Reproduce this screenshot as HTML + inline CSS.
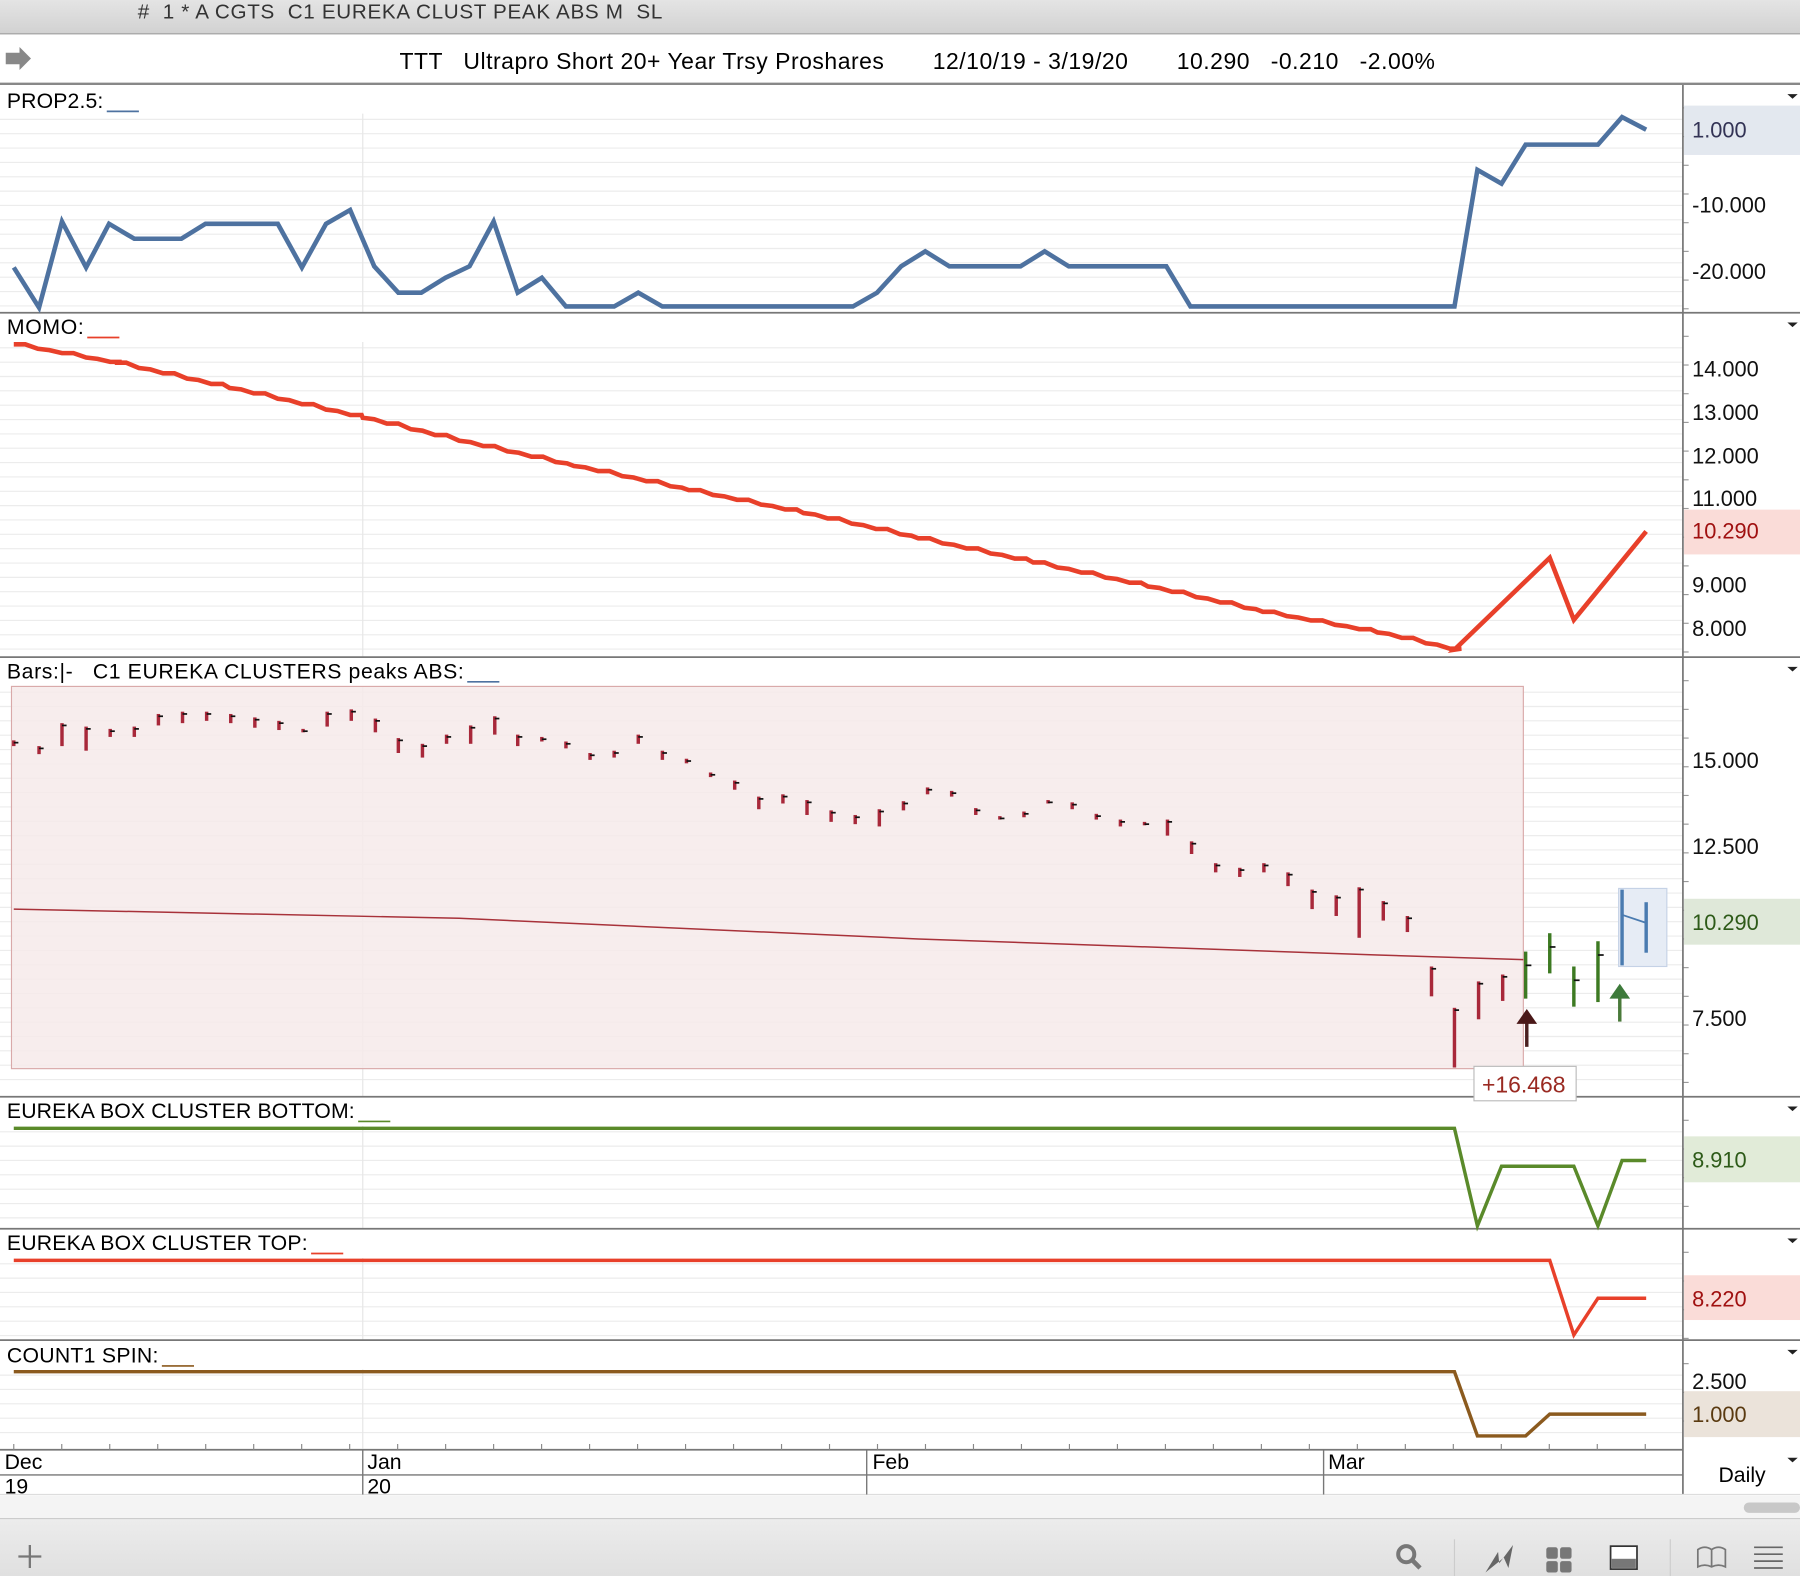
<!DOCTYPE html>
<html><head><meta charset="utf-8"><style>
html,body{margin:0;padding:0;background:#fff;}
svg{display:block;}
text{font-family:"Liberation Sans",Arial,sans-serif;white-space:pre;}
</style></head><body>
<svg id="s" width="1800" height="1576" viewBox="0 0 1568 1373" preserveAspectRatio="none" xmlns="http://www.w3.org/2000/svg">
<defs>
<linearGradient id="tb" x1="0" y1="0" x2="0" y2="1"><stop offset="0" stop-color="#e4e4e4"/><stop offset="1" stop-color="#d2d2d2"/></linearGradient>
<linearGradient id="ft" x1="0" y1="0" x2="0" y2="1"><stop offset="0" stop-color="#ececec"/><stop offset="1" stop-color="#e0e0e0"/></linearGradient>
</defs>
<rect x="0" y="0" width="1568" height="29" fill="url(#tb)"/>
<text x="120" y="16" font-size="18" fill="#333" textLength="457" lengthAdjust="spacing" xml:space="preserve">#  1 * A CGTS  C1 EUREKA CLUST PEAK ABS M  SL</text>
<line x1="0" y1="29.5" x2="1568" y2="29.5" stroke="#999" stroke-width="1"/>
<path d="M5 46 h12 v-5 l10 10 l-10 10 v-5 h-12z" fill="#888"/>
<text x="348" y="60" font-size="20" fill="#000" textLength="902" lengthAdjust="spacing" xml:space="preserve">TTT   Ultrapro Short 20+ Year Trsy Proshares       12/10/19 - 3/19/20       10.290   -0.210   -2.00%</text>
<line x1="0" y1="73" x2="1568" y2="73" stroke="#888" stroke-width="2"/>
<g id="grid"></g>
<g id="main"></g>
</svg>
<script>
const NS="http://www.w3.org/2000/svg";
const g=document.getElementById('grid'), m=document.getElementById('main');
function el(p,tag,a,txt){const e=document.createElementNS(NS,tag);for(const k in a)e.setAttribute(k,a[k]);if(txt!==undefined)e.textContent=txt;p.appendChild(e);return e;}
const panels=[[74,272],[273,572],[573,955],[956,1070],[1071,1167],[1168,1262]];
panels.forEach(([a,b])=>{for(let y=a+30;y<b-2;y+=12.5)el(g,'line',{x1:0,y1:y,x2:1466,y2:y,stroke:'#ececec','stroke-width':1});
 el(g,'line',{x1:316,y1:a+25,x2:316,y2:b,stroke:'#e6e6e6','stroke-width':1});});
el(m,'rect',{x:10,y:598,width:1317,height:333,fill:'#f6eaea','fill-opacity':0.85,stroke:'#d9a9a9','stroke-width':1});
panels.forEach(([a,b],i)=>{ if(i>0) el(m,'line',{x1:0,y1:a-0.5,x2:1568,y2:a-0.5,stroke:'#777','stroke-width':1.5});
 el(m,'path',{d:`M1557 ${a+8} h9 l-4.5 4z`,fill:'#222'});
 for(let y=a+20;y<b;y+=25) el(m,'line',{x1:1466,y1:y,x2:1471,y2:y,stroke:'#999'});});
el(m,'line',{x1:1466,y1:74,x2:1466,y2:1302,stroke:'#777','stroke-width':1.5});
function pl(pts,c,w){el(m,'polyline',{points:pts.map(p=>p.join(',')).join(' '),fill:'none',stroke:c,'stroke-width':w,'stroke-linejoin':'miter'});}
pl([[12,233],[34,268],[54,193],[75,233],[95,195],[117,208],[158,208],[179,195],[242,195],[263,233],[284,195],[305,183],[326,232],[347,255],[367,255],[388,242],[409,232],[430,193],[451,255],[472,242],[493,267],[535,267],[556,255],[577,267],[743,267],[764,255],[785,232],[806,219],[827,232],[889,232],[910,219],[931,232],[1016,232],[1037,267],[1267,267],[1287,148],[1308,160],[1329,126],[1392,126],[1413,102],[1434,113]],'#4e72a0',4);
let mp=[];const mom=[[12,300],[100,316],[200,338],[316,364],[400,384],[500,406],[600,427],[700,447],[800,469],[900,490],[1000,511],[1100,533],[1200,551],[1267,566]];
for(let i=0;i<mom.length-1;i++){const [x1,y1]=mom[i],[x2,y2]=mom[i+1];for(let x=x1;x<x2;x+=21){const t=(x-x1)/(x2-x1);const y=y1+(y2-y1)*t;mp.push([x,y]);mp.push([x+10,y+1.2*(((x/21)|0)%2)]);}}
mp.push([1267,566],[1350,486],[1371,540],[1434,463]);
pl(mp,'#e8402a',4);
el(m,'path',{d:'M12 792 L400 800 L800 818 L1200 832 L1327 836',fill:'none',stroke:'#a8323a','stroke-width':1.3});
const bars=[[12,645,650],[34,650,657],[54,630,650],[75,633,654],[96,635,642],[117,633,642],[138,622,632],[159,620,630],[180,620,628],[201,622,630],[222,625,634],[243,628,636],[264,635,638],[285,620,633],[306,618,628],[327,626,638],[347,643,656],[368,648,660],[389,640,648],[410,632,648],[431,624,640],[451,640,650],[472,642,646],[493,646,652],[514,656,662],[535,654,660],[556,640,648],[577,654,662],[598,661,665],[619,673,677],[640,680,688],[661,694,705],[682,692,700],[703,697,710],[724,706,716],[745,710,718],[766,705,720],[787,698,706],[808,686,692],[829,689,694],[850,704,710],[871,711,714],[892,707,712],[913,697,700],[934,699,705],[955,709,714],[976,714,720],[997,716,719],[1017,714,728],[1038,733,744],[1059,752,760],[1080,756,764],[1101,752,760],[1122,760,772],[1143,775,792],[1164,780,798],[1184,773,817],[1205,785,802],[1226,798,812],[1247,842,868],[1267,878,930],[1288,855,888],[1309,849,872]];
bars.forEach(([x,h,l])=>{el(m,'line',{x1:x,y1:h,x2:x,y2:l,stroke:'#a8283a','stroke-width':3});el(m,'line',{x1:x,y1:h+2,x2:x+4,y2:h+2,stroke:'#111','stroke-width':1.5});});
el(m,'rect',{x:1410,y:774,width:42,height:68,fill:'#e6ecf5',stroke:'#c5d2e6','stroke-width':1});
[[1329,829,870],[1350,813,848],[1371,842,877],[1392,820,873]].forEach(([x,h,l])=>{el(m,'line',{x1:x,y1:h,x2:x,y2:l,stroke:'#3d7a22',"stroke-width":3});el(m,'line',{x1:x,y1:h+12,x2:x+5,y2:h+12,stroke:'#111','stroke-width':1.5});});
[[1413,775,841],[1434,786,830]].forEach(([x,h,l])=>{el(m,'line',{x1:x,y1:h,x2:x,y2:l,stroke:'#4a7bb0','stroke-width':3});});
el(m,'line',{x1:1413,y1:797,x2:1434,y2:804,stroke:'#4a7bb0','stroke-width':1.5});
el(m,'path',{d:'M1330 912 V890',stroke:'#4a2020','stroke-width':3});el(m,'path',{d:'M1321 892 L1330 879 L1339 892Z',fill:'#4a1818'});
el(m,'path',{d:'M1411 890 V868',stroke:'#4a7a3a','stroke-width':3});el(m,'path',{d:'M1402 870 L1411 857 L1420 870Z',fill:'#3d7a3a'});
el(m,'rect',{x:1284,y:929,width:89,height:30,fill:'#fff',stroke:'#bbb'});
el(m,'text',{x:1291,y:952,'font-size':20,fill:'#9a2a22'},'+16.468');
pl([[12,983],[1267,983],[1287,1068],[1308,1016],[1371,1016],[1392,1068],[1413,1011],[1434,1011]],'#5a8a2a',3);
pl([[12,1098],[1350,1098],[1371,1163],[1392,1131],[1434,1131]],'#e8402a',3);
pl([[12,1195],[1267,1195],[1287,1251],[1329,1251],[1350,1232],[1434,1232]],'#8b5a1e',3);
[[92,135,'#e3e8ef','#335','1.000',113],[444,483,'#fadcd8','#a01010','10.290',462],[783,823,'#dfe8d9','#2d5a18','10.290',803],[990,1030,'#e1ebd8','#2d5a18','8.910',1010],[1111,1150,'#fadcd8','#a01010','8.220',1131],[1212,1252,'#ebe3da','#5a3a10','1.000',1232]].forEach(([a,b,bg,c,t,y])=>{el(m,'rect',{x:1467,y:a,width:101,height:b-a,fill:bg});el(m,'text',{x:1474,y:y+7,'font-size':19,fill:c},t);});
[['-10.000',178],['-20.000',236],['14.000',321],['13.000',359],['12.000',397],['11.000',434],['9.000',509],['8.000',547],['15.000',662],['12.500',737],['7.500',887],['2.500',1203]].forEach(([t,y])=>el(m,'text',{x:1474,y:y+7,'font-size':19,fill:'#111'},t));
[['PROP2.5:',94,'#4e72a0',90],['MOMO:',291,'#e8402a',73],['Bars:|-   C1 EUREKA CLUSTERS peaks ABS:',591,'#4e72a0',404],['EUREKA BOX CLUSTER BOTTOM:',974,'#5a8a2a',309],['EUREKA BOX CLUSTER TOP:',1089,'#e8402a',268],['COUNT1 SPIN:',1187,'#8b5a1e',138]].forEach(([t,y,c,w])=>{el(m,'text',{x:6,y:y,'font-size':18.5,fill:'#000',textLength:w-6,lengthAdjust:'spacing'},t);el(m,'line',{x1:w+3,y1:y+3,x2:w+31,y2:y+3,stroke:c,'stroke-width':1.5});});
el(m,'line',{x1:0,y1:1263,x2:1466,y2:1263,stroke:'#777','stroke-width':1.5});
el(m,'line',{x1:0,y1:1285,x2:1466,y2:1285,stroke:'#777','stroke-width':1.2});
el(m,'line',{x1:0,y1:1302,x2:1568,y2:1302,stroke:'#ddd','stroke-width':1});
for(let x=12;x<1440;x+=41.8)el(m,'line',{x1:x,y1:1258,x2:x,y2:1263,stroke:'#888'});
[316,755,1153].forEach(x=>el(m,'line',{x1:x,y1:1263,x2:x,y2:1302,stroke:'#777','stroke-width':1.2}));
[['Dec',4,1280],['19',4,1301],['Jan',320,1280],['20',320,1301],['Feb',760,1280],['Mar',1157,1280],['Daily',1497,1291]].forEach(([t,x,y])=>el(m,'text',{x:x,y:y,'font-size':18.5,fill:'#000'},t));
el(m,'path',{d:'M1557 1270 h9 l-4.5 4z',fill:'#222'});
el(m,'rect',{x:0,y:1303,width:1568,height:20,fill:'#f4f4f4'});
el(m,'rect',{x:1519,y:1309,width:49,height:9,rx:4.5,fill:'#c8c8c8'});
el(m,'rect',{x:0,y:1323,width:1568,height:50,fill:'url(#ft)'});
el(m,'line',{x1:0,y1:1323,x2:1568,y2:1323,stroke:'#ccc'});
el(m,'path',{d:'M26 1346 v20 M16 1356 h20',stroke:'#777','stroke-width':2});
el(m,'circle',{cx:1225,cy:1354,r:7,fill:'none',stroke:'#777','stroke-width':3.5});
el(m,'path',{d:'M1230 1359 l7 7',stroke:'#777','stroke-width':4});
el(m,'line',{x1:1267,y1:1341,x2:1267,y2:1373,stroke:'#ccc'});el(m,'line',{x1:1455,y1:1341,x2:1455,y2:1373,stroke:'#ccc'});
el(m,'path',{d:'M1294 1370 L1305 1352 L1306 1362 L1318 1346 L1314 1366 L1310 1357Z',fill:'#666'});
[[1347,1348],[1359,1348],[1347,1360],[1359,1360]].forEach(([x,y])=>el(m,'rect',{x:x,y:y,width:10,height:10,rx:2,fill:'#777'}));
el(m,'rect',{x:1403,y:1347,width:23,height:20,fill:'#fff',stroke:'#333','stroke-width':1.5});
el(m,'rect',{x:1404,y:1358,width:21,height:8,fill:'#777'});
el(m,'path',{d:'M1479 1350 q6-4 12 0 q6-4 12 0 v15 q-6-3-12 0 q-6-3-12 0z M1491 1350 v15',fill:'none',stroke:'#777','stroke-width':1.5});
[1348,1354,1360,1366].forEach(y=>el(m,'line',{x1:1528,y1:y,x2:1553,y2:y,stroke:'#666','stroke-width':1.5}));
</script>
</body></html>
